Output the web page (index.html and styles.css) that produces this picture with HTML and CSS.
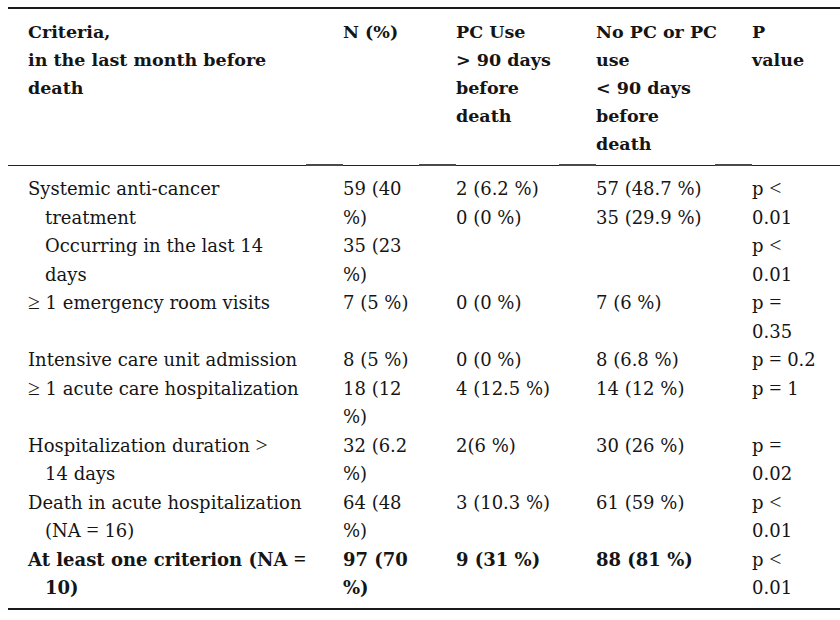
FILE: index.html
```html
<!DOCTYPE html>
<html>
<head>
<meta charset="utf-8">
<link rel="stylesheet" href="styles.css">
</head>
<body>
<table class="tbl">
  <colgroup>
    <col class="c1"><col class="c2"><col class="c3"><col class="c4"><col class="c5">
  </colgroup>
  <thead>
    <tr>
      <th class="crit">Criteria,<br>in the last month before<br>death</th>
      <th class="val">N (%)</th>
      <th class="val">PC Use<br>&gt; 90 days<br>before<br>death</th>
      <th class="val">No PC or PC<br>use<br>&lt; 90 days<br>before<br>death</th>
      <th class="val">P<br>value</th>
    </tr>
  </thead>
  <tbody>
    <tr>
      <td class="crit hang">Systemic anti-cancer<br>treatment</td>
      <td class="val">59 (40<br>%)</td>
      <td class="val">2 (6.2 %)<br>0 (0 %)</td>
      <td class="val">57 (48.7 %)<br>35 (29.9 %)</td>
      <td class="val">p <span class="op">&lt;</span><br>0.01</td>
    </tr>
    <tr>
      <td class="crit sub">Occurring in the last 14<br>days</td>
      <td class="val">35 (23<br>%)</td>
      <td class="val"></td>
      <td class="val"></td>
      <td class="val">p <span class="op">&lt;</span><br>0.01</td>
    </tr>
    <tr>
      <td class="crit hang"><span class="op">≥</span> 1 emergency room visits</td>
      <td class="val">7 (5 %)</td>
      <td class="val">0 (0 %)</td>
      <td class="val">7 (6 %)</td>
      <td class="val">p <span class="op">=</span><br>0.35</td>
    </tr>
    <tr>
      <td class="crit hang">Intensive care unit admission</td>
      <td class="val">8 (5 %)</td>
      <td class="val">0 (0 %)</td>
      <td class="val">8 (6.8 %)</td>
      <td class="val">p <span class="op">=</span> 0.2</td>
    </tr>
    <tr>
      <td class="crit hang"><span class="op">≥</span> 1 acute care hospitalization</td>
      <td class="val">18 (12<br>%)</td>
      <td class="val">4 (12.5 %)</td>
      <td class="val">14 (12 %)</td>
      <td class="val">p <span class="op">=</span> 1</td>
    </tr>
    <tr>
      <td class="crit hang">Hospitalization duration <span class="op">&gt;</span><br>14 days</td>
      <td class="val">32 (6.2<br>%)</td>
      <td class="val">2(6 %)</td>
      <td class="val">30 (26 %)</td>
      <td class="val">p <span class="op">=</span><br>0.02</td>
    </tr>
    <tr>
      <td class="crit hang">Death in acute hospitalization<br>(NA <span class="op">=</span> 16)</td>
      <td class="val">64 (48<br>%)</td>
      <td class="val">3 (10.3 %)</td>
      <td class="val">61 (59 %)</td>
      <td class="val">p <span class="op">&lt;</span><br>0.01</td>
    </tr>
    <tr class="total">
      <td class="crit hang">At least one criterion (NA <span class="op">=</span><br>10)</td>
      <td class="val">97 (70<br>%)</td>
      <td class="val">9 (31 %)</td>
      <td class="val">88 (81 %)</td>
      <td class="val norm">p <span class="op">&lt;</span><br>0.01</td>
    </tr>
  </tbody>
</table>
</body>
</html>
```
FILE: styles.css
```css
html, body {
  margin: 0;
  padding: 0;
  background: #ffffff;
}
body {
  padding: 7px 0 0 8px;
  font-family: "DejaVu Serif", "Liberation Serif", serif;
  font-size: 18px;
  color: #151515;
  overflow: hidden;
}
.tbl {
  width: 832px;
  table-layout: fixed;
  border-collapse: collapse;
  border-top: 2px solid #1a1a1a;
  border-bottom: 2px solid #1a1a1a;
}
.c1 { width: 298px; }
.c2 { width: 113px; }
.c3 { width: 140px; }
.c4 { width: 156px; }
.c5 { width: 125px; }

th, td {
  vertical-align: top;
  text-align: left;
  line-height: 28.5px;
  white-space: nowrap;
  padding: 0;
}
th {
  font-weight: bold;
  font-size: 17.5px;
  line-height: 28px;
  border-bottom: 1px solid #222;
  position: relative;
}
thead th {
  padding-top: 9px;
  padding-bottom: 7px;
}
.op {
  font-family: "Liberation Serif", "DejaVu Serif", serif;
  font-size: 1.2em;
  line-height: 1;
}
.crit { padding-left: 20px; }
.val { padding-left: 37px; }
th.val::after {
  content: "";
  position: absolute;
  left: 0;
  bottom: -1px;
  width: 37px;
  height: 2px;
  background: #4a4a4a;
}
.hang {
  padding-left: 37px;
  text-indent: -17px;
}
.sub {
  padding-left: 37px;
}
tbody tr:first-child td { padding-top: 9px; }
tbody tr:last-child td { padding-bottom: 5px; }
.total td { font-weight: bold; }
.total td.norm { font-weight: normal; }
```
